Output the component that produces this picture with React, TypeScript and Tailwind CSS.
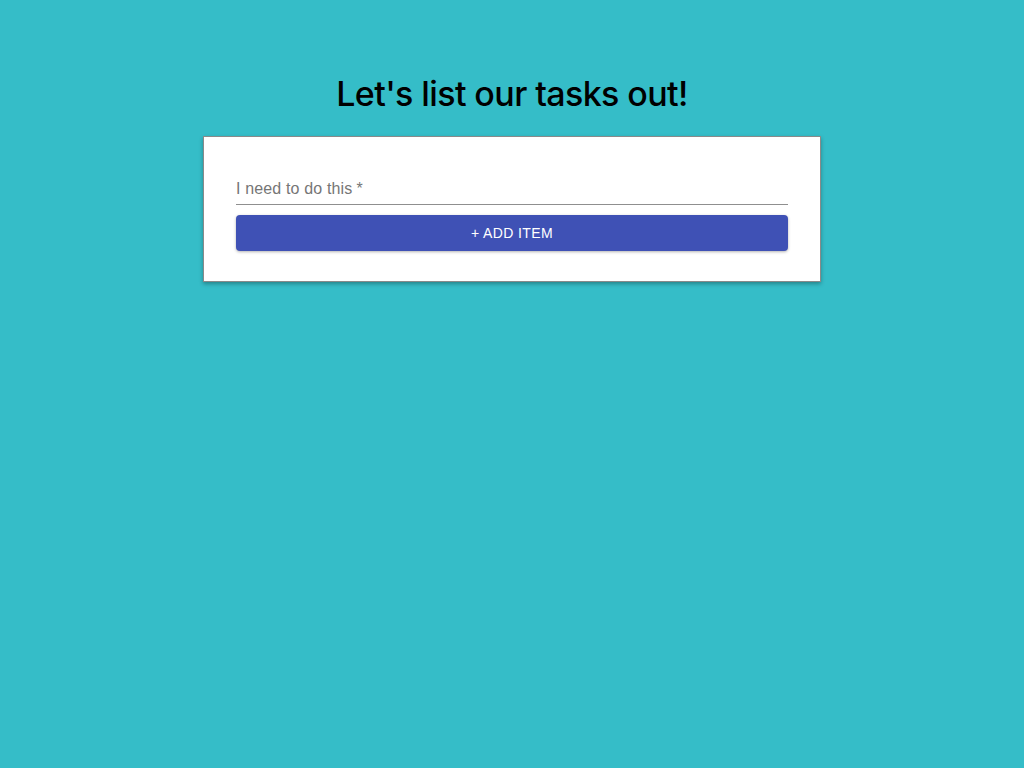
export default function App() {
  return (
    <div className="min-h-screen w-full bg-[#35bdc8] flex flex-col items-center pt-[72px]" style={{ fontFamily: "'Liberation Sans', Arial, sans-serif" }}>
      <h1 className="text-[34px] leading-[44px] font-medium text-black tracking-[-0.6px]" style={{ fontFamily: "Inter, 'Open Sans', sans-serif" }}>
        Let's list our tasks out!
      </h1>
      <div className="mt-[20px] w-[618px] bg-white border border-[#8a8a8a] shadow-[0_2px_4px_rgba(0,0,0,0.3)] px-8 pt-8 pb-[30px]">
        <div className="pt-[10px] pb-[6px] border-b border-[#8f8f8f]">
          <div className="text-[16px] leading-[19px] tracking-[0.15px] text-[#767676]">I need to do this<span className="ml-[4px]">*</span></div>
        </div>
        <button className="mt-[10px] w-full h-9 rounded bg-[#3f51b5] text-white text-[14px] font-normal tracking-[0.4px] shadow-[0_1px_3px_rgba(0,0,0,0.3)]">
          + ADD ITEM
        </button>
      </div>
    </div>
  );
}
